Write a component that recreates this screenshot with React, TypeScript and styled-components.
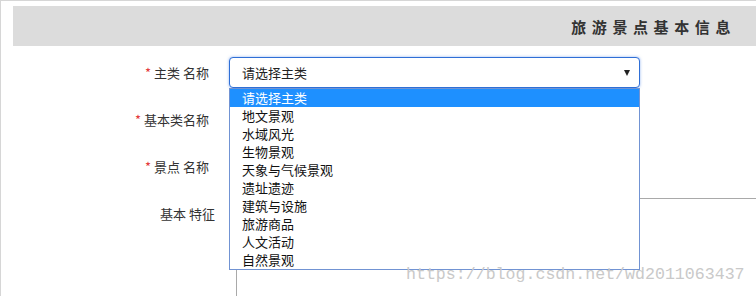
import React from "react";
import styled, { createGlobalStyle } from "styled-components";

const Global = createGlobalStyle`
  html, body { margin: 0; padding: 0; background: #fff; }
  body { font-family: "Microsoft YaHei", "Noto Sans CJK SC", "Noto Sans", sans-serif; }
  * { box-sizing: border-box; }
`;

const Page = styled.div`
  position: relative;
  height: 296px;
  overflow: hidden;
  border-top: 1px solid #d6d6d6;
  border-left: 1px solid #d6d6d6;
  padding: 5px 0 0 12px;
`;

const Header = styled.div`
  height: 40px;
  background: #dcdcdc;
  display: flex;
  align-items: center;
  justify-content: flex-end;
  padding-right: 20px;
`;

const Title = styled.h2`
  margin: 0;
  font-size: 15px;
  font-weight: 600;
  letter-spacing: 5.6px;
  color: #333;
`;

const Form = styled.div`
  display: flex;
  flex-direction: column;
  gap: 16px;
  padding-top: 11px;
`;

const Row = styled.div`
  display: grid;
  grid-template-columns: 196px 411px;
  column-gap: 20px;
  align-items: start;
`;

const Label = styled.label<{ $shift?: number; $pt?: number }>`
  text-align: right;
  font-size: 13px;
  line-height: 31px;
  color: #333;
  margin-right: ${(p) => p.$shift ?? 0}px;
  padding-top: ${(p) => p.$pt ?? 0}px;
  white-space: pre;
`;

const Star = styled.span`
  color: #e4393c;
  margin-right: 3px;
`;

const Control = styled.div`
  position: relative;
`;

const Select = styled.div<{ $focus?: boolean }>`
  height: 31px;
  border: 1px solid ${(p) => (p.$focus ? "#2f6fd6" : "#aaa")};
  border-radius: 4px;
  box-shadow: ${(p) => (p.$focus ? "0 0 3px rgba(60,120,230,0.55)" : "none")};
  display: flex;
  align-items: center;
  justify-content: space-between;
  padding: 0 8px 0 12px;
  font-size: 13px;
  color: #222;
  background: #fff;
`;

const Arrow = styled.span`
  width: 0;
  height: 0;
  border-left: 3.5px solid transparent;
  border-right: 3.5px solid transparent;
  border-top: 6px solid #222;
  margin-right: 1px;
`;

const List = styled.ul`
  position: absolute;
  top: 31px;
  left: 0;
  width: 411px;
  margin: 0;
  padding: 0;
  list-style: none;
  background: #fff;
  border: 1px solid #7193d3;
  z-index: 5;
`;

const Item = styled.li<{ $active?: boolean }>`
  height: 18px;
  line-height: 18px;
  padding-left: 12px;
  font-size: 13px;
  color: ${(p) => (p.$active ? "#fff" : "#111")};
  background: ${(p) => (p.$active ? "#1e90ff" : "transparent")};
`;

const TextArea = styled.div`
  margin-left: 7px;
  width: 560px;
  height: 140px;
  border: 1px solid #a9a9a9;
`;

const Watermark = styled.div`
  position: absolute;
  left: 405px;
  top: 264px;
  font-family: "Liberation Mono", "DejaVu Sans Mono", monospace;
  font-size: 16.6px;
  color: #c9c9c9;
  white-space: nowrap;
  z-index: 6;
`;

const options = [
  "请选择主类",
  "地文景观",
  "水域风光",
  "生物景观",
  "天象与气候景观",
  "遗址遗迹",
  "建筑与设施",
  "旅游商品",
  "人文活动",
  "自然景观",
];

export default function App() {
  return (
    <>
      <Global />
      <Page>
        <Header>
          <Title>旅游景点基本信息</Title>
        </Header>
        <Form>
          <Row>
            <Label>
              <Star>*</Star>主类 名称
            </Label>
            <Control>
              <Select $focus>
                <span>请选择主类</span>
                <Arrow />
              </Select>
              <List>
                {options.map((o, i) => (
                  <Item key={o} $active={i === 0}>
                    {o}
                  </Item>
                ))}
              </List>
            </Control>
          </Row>
          <Row>
            <Label>
              <Star>*</Star>基本类名称
            </Label>
            <Control>
              <Select />
            </Control>
          </Row>
          <Row>
            <Label>
              <Star>*</Star>景点 名称
            </Label>
            <Control>
              <Select />
            </Control>
          </Row>
          <Row>
            <Label $shift={-6}>基本 特征</Label>
            <Control>
              <TextArea />
            </Control>
          </Row>
        </Form>
        <Watermark>https://blog.csdn.net/wd2011063437</Watermark>
      </Page>
    </>
  );
}
